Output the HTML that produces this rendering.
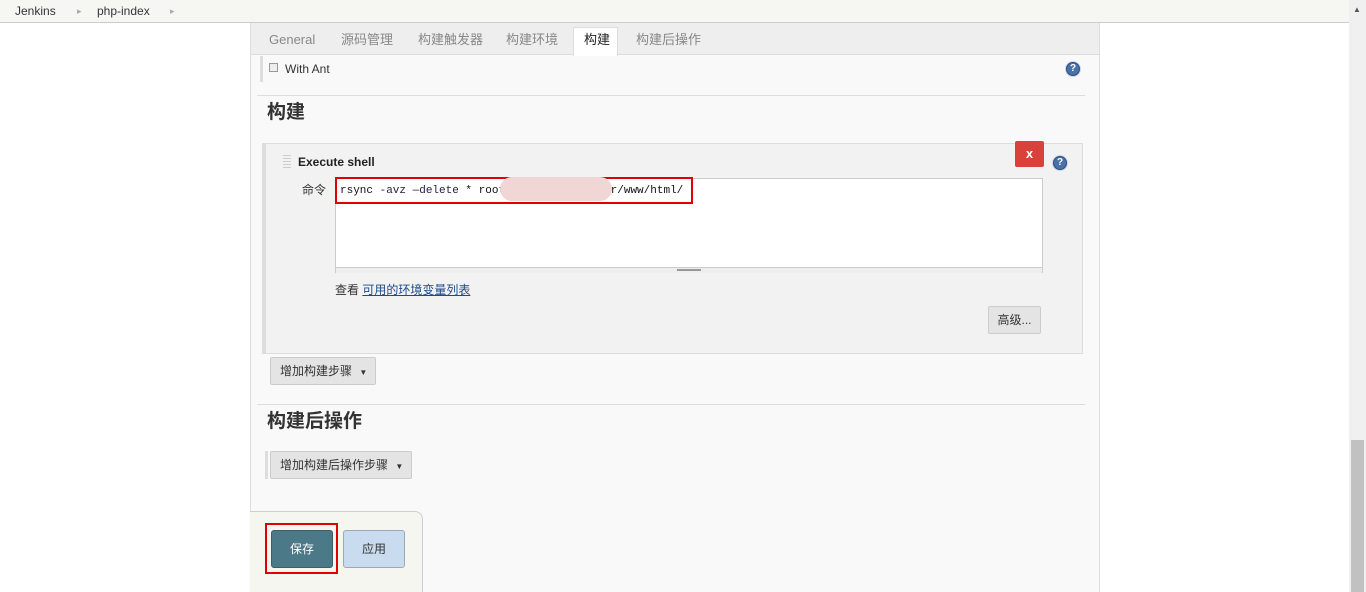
<!DOCTYPE html>
<html><head><meta charset="utf-8"><style>
*{box-sizing:border-box;margin:0;padding:0}
body{width:1366px;height:592px;overflow:hidden;background:#fff;font-family:"Liberation Sans","Noto Sans CJK SC",sans-serif;font-size:13px;line-height:16px;color:#333;position:relative}
.a{position:absolute}
.help{width:14px;height:14px;border-radius:50%;background:#4a72a8;border:1px solid #2d4f80;color:#fff;font-size:10px;font-weight:bold;text-align:center;line-height:12px;box-shadow:0 0 0 1px #c9d6e8}
.btn{background:#e4e4e4;border:1px solid #ccc;border-radius:2px;font-size:12px;color:#333}
</style></head><body>
<div class="a" style="left:0;top:0;width:1349px;height:23px;background:#f6f6f2;border-bottom:1px solid #ccc"></div>
<div class="a" style="left:15px;top:3px;font-size:12px;color:#333">Jenkins</div>
<div class="a" style="left:77px;top:3px;font-size:9px;color:#aaa">▸</div>
<div class="a" style="left:97px;top:3px;font-size:12px;color:#333">php-index</div>
<div class="a" style="left:170px;top:3px;font-size:9px;color:#aaa">▸</div>
<div class="a" style="left:1349px;top:0;width:17px;height:592px;background:#f0f0f0"></div>
<div class="a" style="left:1353px;top:2px;font-size:8px;color:#555">▲</div>
<div class="a" style="left:1351px;top:440px;width:13px;height:152px;background:#c1c1c1"></div>
<div class="a" style="left:250px;top:23px;width:850px;height:569px;background:#f9f9f9;border-left:1px solid #ddd;border-right:1px solid #ddd"></div>
<div class="a" style="left:251px;top:23px;width:848px;height:32px;background:#eee;border-bottom:1px solid #ddd"></div>
<div class="a" style="left:573px;top:27px;width:45px;height:29px;background:#fff;border:1px solid #ddd;border-bottom:none"></div>
<div class="a" style="left:269px;top:32px;color:#888">General</div>
<div class="a" style="left:341px;top:32px;color:#888">源码管理</div>
<div class="a" style="left:418px;top:32px;color:#888">构建触发器</div>
<div class="a" style="left:506px;top:32px;color:#888">构建环境</div>
<div class="a" style="left:584px;top:32px;color:#222">构建</div>
<div class="a" style="left:636px;top:32px;color:#888">构建后操作</div>
<div class="a" style="left:260px;top:56px;width:3px;height:26px;background:#ddd"></div>
<div class="a" style="left:269px;top:63px;width:9px;height:9px;border:1px solid #999;background:#eee"></div>
<div class="a" style="left:285px;top:61px;font-size:12px">With Ant</div>
<div class="help a" style="left:1066px;top:62px">?</div>
<div class="a" style="left:257px;top:95px;width:828px;height:1px;background:#ddd"></div>
<div class="a" style="left:267px;top:102px;font-size:19px;line-height:22px;font-weight:bold;color:#333">构建</div>
<div class="a" style="left:262px;top:143px;width:821px;height:211px;background:#f2f2f2;border:1px solid #ddd;border-left:4px solid #ddd"></div>
<div class="a" style="left:283px;top:155px;width:8px;height:14px;background:repeating-linear-gradient(#ccc 0 1px,transparent 1px 3px)"></div>
<div class="a" style="left:298px;top:154px;font-size:12px;font-weight:bold;color:#222">Execute shell</div>
<div class="a" style="left:1015px;top:141px;width:29px;height:26px;background:#d9423a;border-radius:2px;color:#fff;font-weight:bold;text-align:center;line-height:25px;font-size:13px">x</div>
<div class="help a" style="left:1053px;top:156px">?</div>
<div class="a" style="left:302px;top:182px;font-size:12px">命令</div>
<div class="a" style="left:335px;top:178px;width:708px;height:95px;background:#fff;border:1px solid #ccc"></div>
<div class="a" style="left:336px;top:267px;width:706px;height:6px;background:#eee;border-top:1px solid #ccc"></div>
<div class="a" style="left:677px;top:269px;width:24px;height:2px;border-top:1px solid #999;border-bottom:1px solid #999"></div>
<div class="a" style="left:335px;top:177px;width:358px;height:27px;border:2px solid #e00000"></div>
<div class="a" style="left:340px;top:183px;font-family:'Liberation Mono',monospace;font-size:11px;color:#111;white-space:pre">rsync <span style="color:#224">-avz —delete</span> * root@           :/var/www/html/</div>
<div class="a" style="left:500px;top:177px;width:112px;height:24px;border-radius:12px;background:#f1d6d6"></div>
<div class="a" style="left:335px;top:282px;font-size:12px">查看 <span style="color:#204a87;text-decoration:underline">可用的环境变量列表</span></div>
<div class="btn a" style="left:988px;top:306px;width:53px;height:28px;text-align:center;line-height:26px">高级...</div>
<div class="btn a" style="left:270px;top:357px;width:106px;height:28px;line-height:26px;padding-left:9px">增加构建步骤 <span style="font-size:8px;margin-left:4px">▼</span></div>
<div class="a" style="left:257px;top:404px;width:828px;height:1px;background:#ddd"></div>
<div class="a" style="left:267px;top:411px;font-size:19px;line-height:22px;font-weight:bold;color:#333">构建后操作</div>
<div class="a" style="left:265px;top:451px;width:3px;height:28px;background:#ddd"></div>
<div class="btn a" style="left:270px;top:451px;width:142px;height:28px;line-height:26px;padding-left:9px">增加构建后操作步骤 <span style="font-size:8px;margin-left:4px">▼</span></div>
<div class="a" style="left:250px;top:511px;width:173px;height:81px;background:#f5f6f0;border:1px solid #ccd;border-left:none;border-bottom:none;border-radius:0 8px 0 0"></div>
<div class="a" style="left:265px;top:523px;width:73px;height:51px;border:2px solid #e00000"></div>
<div class="a" style="left:271px;top:530px;width:62px;height:38px;background:#4b7987;border:1px solid #3a5f6b;border-radius:3px;color:#fff;text-align:center;line-height:36px;font-size:12px">保存</div>
<div class="a" style="left:343px;top:530px;width:62px;height:38px;background:#c9dcef;border:1px solid #9ab;border-radius:3px;color:#333;text-align:center;line-height:36px;font-size:12px">应用</div>
</body></html>
